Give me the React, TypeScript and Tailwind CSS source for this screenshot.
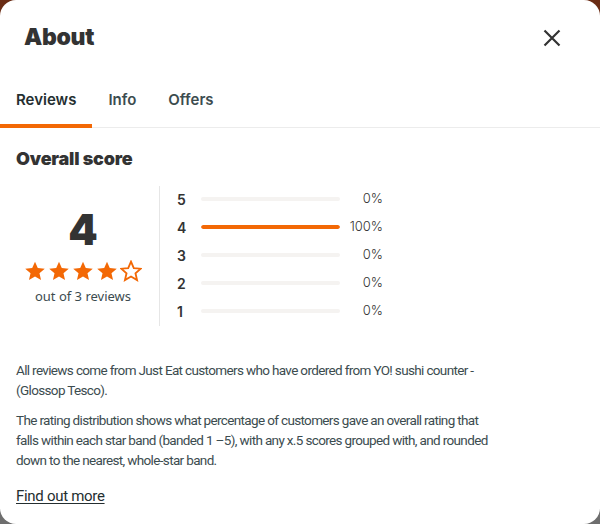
import React from "react";

const Star = ({ filled }: { filled: boolean }) => (
  <svg width="22" height="22" viewBox="0 0 24 24">
    <path
      d="M12 1.8l3.05 7.02 7.6.66-5.77 5.02 1.72 7.45L12 18.02l-6.6 3.93 1.72-7.45-5.77-5.02 7.6-.66z"
      fill={filled ? "#f36805" : "none"}
      stroke="#f36805"
      strokeWidth={filled ? 0 : 2}
      strokeLinejoin="miter"
    />
  </svg>
);

const rows = [
  { n: 5, p: 0 },
  { n: 4, p: 100 },
  { n: 3, p: 0 },
  { n: 2, p: 0 },
  { n: 1, p: 0 },
];

export default function App() {
  return (
    <div className="w-[600px] h-[524px] bg-[linear-gradient(#6a2c14,#6a2c14_40%,#6e6e6e_60%,#6e6e6e)]">
      <div
        className="w-full h-full bg-white rounded-[16px] flex flex-col text-[#242e30]"
        style={{ fontFamily: "'Noto Sans', sans-serif" }}
      >
        <div className="flex items-center justify-between pl-6 pr-[38px] pt-[2px] h-[72px]">
          <h1
            className="text-[23px] font-black leading-none tracking-[-0.3px] text-[#333]"
            style={{ fontFamily: "Inter, sans-serif" }}
          >
            About
          </h1>
          <svg width="20" height="20" viewBox="0 0 20 20" className="mt-[2px]">
            <path d="M2.5 2.5L17.5 17.5M17.5 2.5L2.5 17.5" stroke="#333" strokeWidth="2.2" />
          </svg>
        </div>
        <div className="flex border-b border-[#ececec] mt-[8px]" style={{ fontFamily: "Inter, sans-serif" }}>
          {["Reviews", "Info", "Offers"].map((t, i) => (
            <div
              key={t}
              className={
                "px-4 pt-[10px] pb-[14px] text-[15px] font-semibold leading-5 border-b-4 -mb-px " +
                (i === 0 ? "border-[#f36805] text-[#242e30]" : "border-transparent text-[#3c4c4f]")
              }
            >
              {t}
            </div>
          ))}
        </div>
        <div className="px-4">
          <h2
            className="text-[18px] font-black mt-[19px] leading-6 text-[#333] tracking-[-0.2px]"
            style={{ fontFamily: "Inter, sans-serif" }}
          >
            Overall score
          </h2>
          <div className="flex mt-[15px]">
            <div className="w-[144px] h-[140px] pr-[9px] flex flex-col items-center justify-center border-r border-[#e6e6e6]">
              <div
                className="text-[42px] font-black leading-none text-[#333] mt-[2px]"
                style={{ fontFamily: "Inter, sans-serif" }}
              >
                4
              </div>
              <div className="flex gap-[2px] mt-[9px]">
                {[0, 1, 2, 3, 4].map((i) => (
                  <Star key={i} filled={i < 4} />
                ))}
              </div>
              <div className="text-[13px] text-[#3c4c4f] mt-[4px] leading-5">out of 3 reviews</div>
            </div>
            <div
              className="flex flex-col pl-[17px] -mt-[1px]"
              style={{ fontFamily: "Inter, sans-serif" }}
            >
              {rows.map((r) => (
                <div key={r.n} className="flex items-center h-[28px]">
                  <span className="w-[24px] text-[14px] font-semibold text-[#333]">{r.n}</span>
                  <div className="w-[139px] h-[4px] rounded-full bg-[#f5f3f1] overflow-hidden">
                    <div className="h-full bg-[#f36805] rounded-full" style={{ width: `${r.p}%` }} />
                  </div>
                  <span className="w-[43px] text-right text-[13px] font-light text-[#333]">{r.p}%</span>
                </div>
              ))}
            </div>
          </div>
          <div
            className="text-[13.5px] leading-5 text-[#3c4c4f] mt-[34px] tracking-[-0.65px] whitespace-nowrap"
            style={{ fontFamily: "Roboto, sans-serif" }}
          >
            <p>
              All reviews come from Just Eat customers who have ordered from YO! sushi counter -
              <br />
              (Glossop Tesco).
            </p>
            <p className="mt-[10px]">
              The rating distribution shows what percentage of customers gave an overall rating that
              <br />
              falls within each star band (banded 1 –5), with any x.5 scores grouped with, and rounded
              <br />
              down to the nearest, whole-star band.
            </p>
          </div>
          <a
            className="inline-block mt-[15px] text-[15px] underline underline-offset-2 text-[#242e30] tracking-[-0.3px]"
            style={{ fontFamily: "Roboto, sans-serif" }}
          >
            Find out more
          </a>
        </div>
      </div>
    </div>
  );
}
